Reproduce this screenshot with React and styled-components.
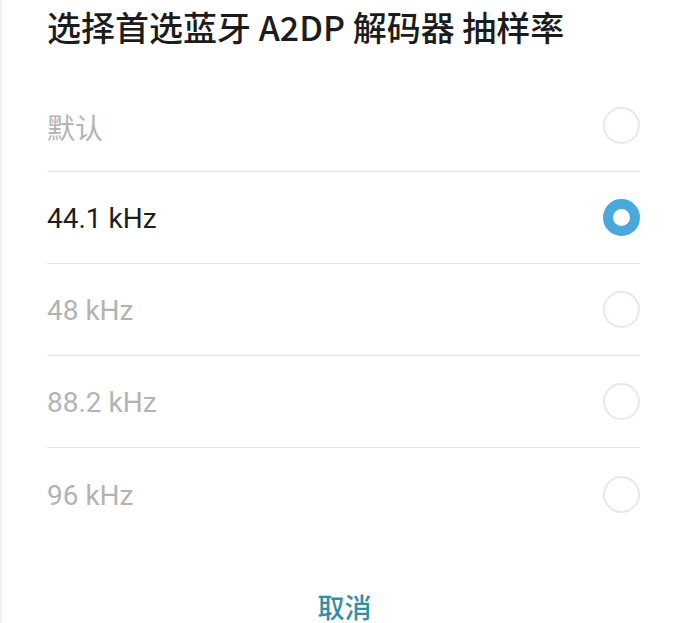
import React, { useState } from "react";
import styled, { createGlobalStyle } from "styled-components";

const options = ["默认", "44.1 kHz", "48 kHz", "88.2 kHz", "96 kHz"];

const GlobalStyle = createGlobalStyle`
  html, body {
    margin: 0;
    padding: 0;
    background: #ffffff;
  }
  body {
    font-family: Roboto, "Noto Sans CJK SC", sans-serif;
  }
`;

function App() {
  const [selected] = useState(1);

  return (
    <Dialog>
      <GlobalStyle />
      <Title>选择首选蓝牙 A2DP 解码器 抽样率</Title>
      <List>
        {options.map((label, i) => (
          <Row key={label} last={i === options.length - 1}>
            <Label active={i === selected}>{label}</Label>
            <Radio checked={i === selected} />
          </Row>
        ))}
      </List>
      <Footer>
        <CancelButton>取消</CancelButton>
      </Footer>
    </Dialog>
  );
}

const Dialog = styled.div`
  width: 683px;
  height: 623px;
  box-sizing: border-box;
  border-left: 2px solid #f0f0f0;
  background: #ffffff;
  overflow: hidden;
  display: flex;
  flex-direction: column;
`;

const Title = styled.h1`
  margin: 0;
  height: 80px;
  box-sizing: border-box;
  padding: 7px 0 0 45px;
  font-family: "Noto Sans CJK SC", Roboto, sans-serif;
  font-size: 34px;
  font-weight: 500;
  line-height: 40px;
  color: #1c1c1c;
`;

const List = styled.div`
  display: flex;
  flex-direction: column;
  margin: 0 43px 0 45px;
`;

const Row = styled.div`
  height: ${(p) => (p.last ? "92px" : "91px")};
  display: flex;
  align-items: center;
  justify-content: space-between;
  border-bottom: ${(p) => (p.last ? "none" : "1px solid #e4e4e4")};
`;

const Label = styled.span`
  font-family: Roboto, "Noto Sans CJK SC", sans-serif;
  font-size: 28px;
  color: ${(p) => (p.active ? "#1e1e1e" : "#b3b3b3")};
  padding-top: 2px;
`;

const Radio = styled.span`
  width: 37px;
  height: 37px;
  box-sizing: border-box;
  border-radius: 50%;
  border: ${(p) => (p.checked ? "10px solid #49a8dc" : "2px solid #e8e8e8")};
  background: #ffffff;
`;

const Footer = styled.div`
  flex: 1;
  display: flex;
  justify-content: center;
  align-items: flex-end;
  padding-left: 4px;
`;

const CancelButton = styled.button`
  border: none;
  background: none;
  padding: 0;
  margin-bottom: 1px;
  font-family: "Noto Sans CJK SC", sans-serif;
  font-size: 27px;
  font-weight: 500;
  line-height: 30px;
  color: #2e8fa8;
  cursor: pointer;
`;

export default App;
